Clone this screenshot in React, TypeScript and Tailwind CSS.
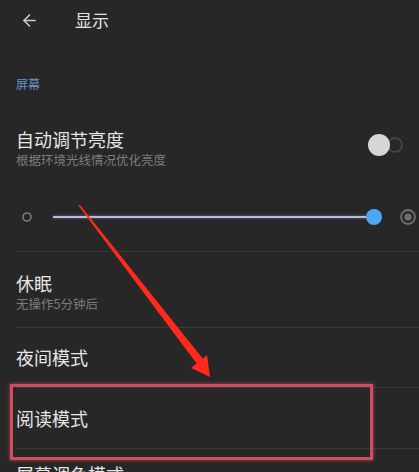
import { ArrowLeft } from 'lucide-react';

const font = { fontFamily: '"Noto Sans CJK SC", "Noto Sans", sans-serif' };

function Divider() {
  return <div className="ml-4 h-px bg-[#383838]" />;
}

function Toggle() {
  return (
    <svg width="40" height="26" viewBox="0 0 40 26" className="-mt-1 mr-[12px]">
      <circle cx="28" cy="13" r="7" fill="none" stroke="#4a4a4a" strokeWidth="1.5" />
      <circle cx="12" cy="13" r="11" fill="#d6d6d6" />
    </svg>
  );
}

function BrightnessSlider() {
  return (
    <div className="flex items-center h-[34px]">
      <svg width="53" height="20" viewBox="0 0 53 20">
        <circle cx="27" cy="10" r="4" fill="none" stroke="#7a7a7a" strokeWidth="1.6" />
      </svg>
      <div className="relative flex-1 h-[2px] bg-[#b9bdd9] shadow-[0_0_3px_rgba(160,170,230,0.6)]">
        <div className="absolute -right-[8px] -top-[7px] w-4 h-4 rounded-full bg-[#4ba7f2]" />
      </div>
      <svg width="45" height="20" viewBox="0 0 45 20">
        <circle cx="34" cy="10" r="7" fill="none" stroke="#6e6e6e" strokeWidth="1.8" />
        <circle cx="34" cy="10" r="3.6" fill="#6e6e6e" />
      </svg>
    </div>
  );
}

export default function App() {
  return (
    <div className="relative w-full h-[472px] bg-[#272727] overflow-hidden" style={font}>
      {/* Header */}
      <div className="flex items-center h-[40px]">
        <ArrowLeft className="ml-[20px] w-[19px] h-[19px] text-[#cfcfcf]" strokeWidth={2} />
        <span className="ml-[36px] text-[17px] leading-[22px] text-[#e4e4e4]">显示</span>
      </div>

      {/* Section label */}
      <div className="pt-[36px] px-4 text-[12px] leading-[16px] text-[#6d93c6]">屏幕</div>

      {/* Auto brightness */}
      <div className="pt-[34px] pl-4 flex items-center justify-between">
        <div>
          <div className="text-[18px] leading-[26px] text-[#e6e6e6]">自动调节亮度</div>
          <div className="text-[12.5px] leading-[16px] text-[#7d7d7d]">根据环境光线情况优化亮度</div>
        </div>
        <Toggle />
      </div>

      <div className="pt-[32px] pb-[17px]">
        <BrightnessSlider />
      </div>

      <Divider />

      <div className="h-[75px] pl-4 pt-[19px]">
        <div className="text-[18px] leading-[25px] text-[#e6e6e6]">休眠</div>
        <div className="text-[12.5px] leading-[16px] text-[#7d7d7d]">无操作5分钟后</div>
      </div>

      <Divider />

      <div className="h-[59px] pl-4 flex items-center text-[18px] text-[#e6e6e6]">夜间模式</div>

      <Divider />

      <div className="h-[60px] pl-4 flex items-center text-[18px] text-[#e6e6e6]">阅读模式</div>

      <Divider />

      <div className="h-[60px] pl-4 pt-[14px] text-[18px] leading-[22px] text-[#e6e6e6]">屏幕调色模式</div>

      {/* Annotation: highlight box */}
      <div className="absolute left-[10px] top-[384px] w-[363px] h-[76px] border-[3px] border-[#cf4d5d] shadow-[0_0_4px_rgba(230,80,100,0.7)]" />

      {/* Annotation: arrow */}
      <svg className="absolute left-0 top-0 pointer-events-none" width="419" height="472" viewBox="0 0 419 472">
        <polygon points="78,205 80,205 203,359 197,364" fill="#ff2a1c" />
        <polygon points="191,368 207,355 210,377" fill="#ff2a1c" />
      </svg>
    </div>
  );
}
